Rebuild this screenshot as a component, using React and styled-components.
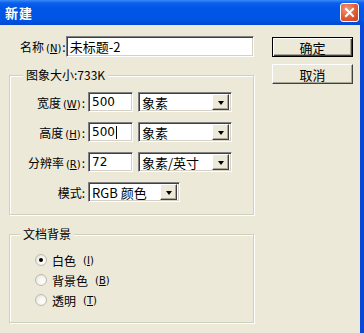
import styled, { createGlobalStyle } from 'styled-components';

const Global = createGlobalStyle`
  html, body { margin: 0; padding: 0; background: #ECE9D8; }
  body {
    font-family: "Noto Sans CJK SC", "DejaVu Sans", sans-serif;
    font-size: 12px;
    color: #000;
  }
`;

const Window = styled.div`
  width: 364px;
  height: 333px;
  overflow: hidden;
  display: flex;
  flex-direction: column;
  background: #ECE9D8;
`;

const TitleBar = styled.div`
  height: 25px;
  flex: none;
  display: flex;
  align-items: center;
  justify-content: space-between;
  padding: 0 5px 0 5px;
  box-sizing: border-box;
  background: linear-gradient(to bottom, #3B8CF5 0, #0A5FEF 3px, #0056E7 8px, #0055E5 19px, #0049D4 25px);
  color: #fff;
  font-weight: bold;
  font-size: 13px;
  letter-spacing: 1px;
`;

const CloseButton = styled.div`
  width: 19px;
  height: 19px;
  box-sizing: border-box;
  border: 1px solid #fff;
  border-radius: 3px;
  background: radial-gradient(circle at 35% 30%, #F09A7A 0, #E35A33 55%, #C7401E 100%);
  display: flex;
  align-items: center;
  justify-content: center;
`;

const Body = styled.div`
  flex: 1;
  display: flex;
  align-items: flex-start;
  padding: 11px 0 0 9px;
  border-right: 4px solid #0A47D6;
`;

const LeftCol = styled.div`
  width: 245px;
  flex: none;
  display: flex;
  flex-direction: column;
`;

const NameRow = styled.div`
  display: flex;
  align-items: center;
  height: 21px;
  padding-left: 11px;
`;

const NameLabel = styled.span`
  width: 46px;
  white-space: nowrap;
`;

const Mnemonic = styled.span`
  font-family: "DejaVu Sans", sans-serif;
  font-size: 10px;
  margin: 0 1px 0 2px;
  & u { text-underline-offset: 1px; }
`;

const Key = ({ k }) => (
  <Mnemonic>(<u>{k}</u>)</Mnemonic>
);

const Field = styled.div`
  box-sizing: border-box;
  width: ${p => p.$w}px;
  height: ${p => p.$h || 20}px;
  background: #fff;
  border: 1px solid;
  border-color: #808080 #fff #fff #808080;
  box-shadow: inset 1px 1px 0 #404040, inset -1px -1px 0 #D4D0C8;
  display: flex;
  align-items: center;
  padding: 0 2px 0 3px;
  font-size: ${p => (p.$latin ? 12 : 13)}px;
  font-family: ${p => (p.$latin ? '"DejaVu Sans", sans-serif' : 'inherit')};
  white-space: nowrap;
`;

const Caret = styled.span`
  display: inline-block;
  width: 1px;
  height: 13px;
  background: #000;
  margin-left: 1px;
`;

const Group = styled.fieldset`
  margin: ${p => p.$top}px 0 0 0;
  padding: ${p => p.$pt}px 0 ${p => p.$pb}px 0;
  border: 1px solid #D0D0BF;
  box-shadow: inset 1px 1px 0 #fff, 1px 1px 0 #fff;
  min-width: 0;
  display: flex;
  flex-direction: column;
  gap: ${p => p.$gap}px;
`;

const Legend = styled.legend`
  margin-left: ${p => p.$ml}px;
  padding: 0 3px;
  line-height: 14px;
  background: #ECE9D8;
  font-size: 12px;
`;

const Row = styled.div`
  display: flex;
  align-items: center;
  height: 20px;
  gap: 5px;
`;

const RowLabel = styled.span`
  width: 75px;
  margin-right: -2px;
  text-align: right;
  white-space: nowrap;
`;

const SelectBox = styled(Field)`
  justify-content: space-between;
  padding-right: 2px;
`;

const DropButton = styled.div`
  width: 17px;
  height: 16px;
  box-sizing: border-box;
  background: #ECE9D8;
  border: 1px solid;
  border-color: #fff #404040 #404040 #fff;
  box-shadow: inset -1px -1px 0 #ACA899;
  display: flex;
  align-items: center;
  justify-content: center;
  &::after {
    content: '';
    border-left: 3.5px solid transparent;
    border-right: 3.5px solid transparent;
    border-top: 4px solid #000;
    margin-top: 1px;
  }
`;

const RadioRow = styled.label`
  display: flex;
  align-items: center;
  height: 20px;
  padding-left: 25px;
  gap: 5px;
`;

const Radio = styled.span`
  width: 12px;
  height: 12px;
  box-sizing: border-box;
  border-radius: 50%;
  border: 1px solid #BDBBAE;
  background: radial-gradient(circle at 65% 65%, #fff 0, #F4F3EE 50%, #D8D6CA 100%);
  display: flex;
  align-items: center;
  justify-content: center;
  &::after {
    content: '';
    display: ${p => (p.$checked ? 'block' : 'none')};
    width: 4px;
    height: 4px;
    border-radius: 50%;
    background: #000;
  }
`;

const RightCol = styled.div`
  margin-left: 18px;
  padding-top: 1px;
  display: flex;
  flex-direction: column;
  gap: 7px;
`;

const Button = styled.div`
  width: 81px;
  height: 20px;
  box-sizing: border-box;
  background: #ECE9D8;
  border: 1px solid;
  border-color: ${p => (p.$default ? '#000' : '#fff #404040 #404040 #fff')};
  box-shadow: ${p => (p.$default
    ? 'inset 1px 1px 0 #fff, inset -1px -1px 0 #404040, inset -2px -2px 0 #ACA899'
    : 'inset -1px -1px 0 #ACA899')};
  display: flex;
  align-items: center;
  justify-content: center;
  font-size: 13px;
`;

const Select = ({ w, children }) => (
  <SelectBox $w={w}>
    <span>{children}</span>
    <DropButton />
  </SelectBox>
);

export default function App() {
  return (
    <Window>
      <Global />
      <TitleBar>
        <span>新建</span>
        <CloseButton>
          <svg width="11" height="11" viewBox="0 0 11 11">
            <path d="M2 2 L9 9 M9 2 L2 9" stroke="#fff" strokeWidth="2" strokeLinecap="square" />
          </svg>
        </CloseButton>
      </TitleBar>
      <Body>
        <LeftCol>
          <NameRow>
            <NameLabel>名称<Key k="N" />:</NameLabel>
            <Field $w={191} $h={21}>未标题-2</Field>
          </NameRow>

          <Group $top={11} $pt={10} $pb={12} $gap={10}>
            <Legend $ml={13}>图象大小:733K</Legend>
            <Row>
              <RowLabel>宽度<Key k="W" />:</RowLabel>
              <Field $w={45} $latin>500</Field>
              <Select w={94}>象素</Select>
            </Row>
            <Row>
              <RowLabel>高度<Key k="H" />:</RowLabel>
              <Field $w={45} $latin>500<Caret /></Field>
              <Select w={94}>象素</Select>
            </Row>
            <Row>
              <RowLabel>分辨率<Key k="R" />:</RowLabel>
              <Field $w={45} $latin>72</Field>
              <Select w={94}>象素/英寸</Select>
            </Row>
            <Row>
              <RowLabel>模式:</RowLabel>
              <Select w={92}>RGB 颜色</Select>
            </Row>
          </Group>

          <Group $top={12} $pt={9} $pb={12} $gap={0}>
            <Legend $ml={10}>文档背景</Legend>
            <RadioRow><Radio $checked />白色<Key k="I" /></RadioRow>
            <RadioRow><Radio />背景色<Key k="B" /></RadioRow>
            <RadioRow><Radio />透明<Key k="T" /></RadioRow>
          </Group>
        </LeftCol>

        <RightCol>
          <Button $default>确定</Button>
          <Button>取消</Button>
        </RightCol>
      </Body>
    </Window>
  );
}
